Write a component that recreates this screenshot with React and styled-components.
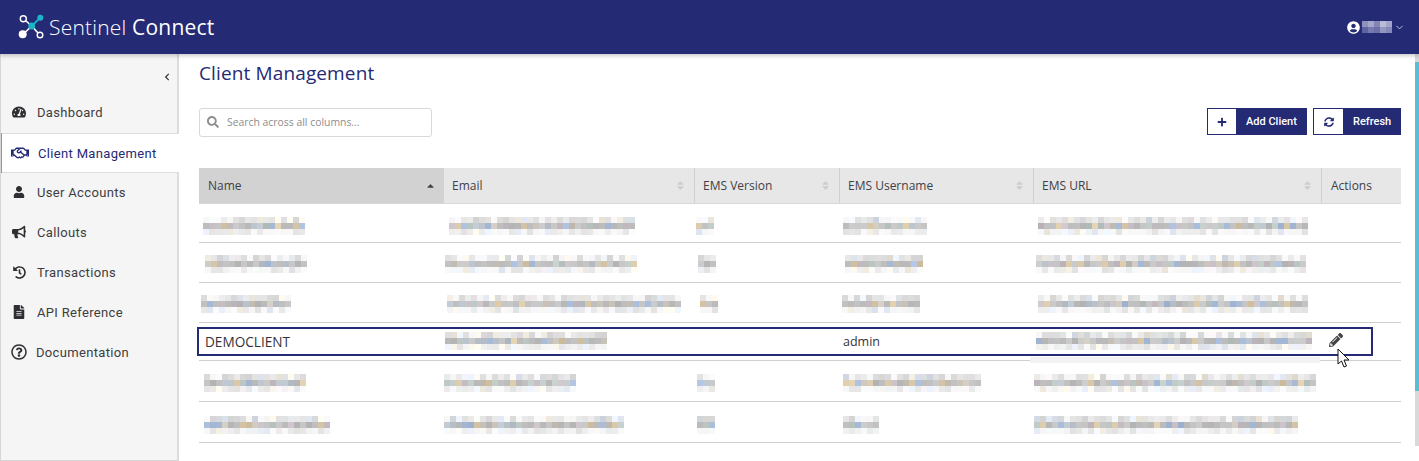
import React from 'react';
import styled, { createGlobalStyle } from 'styled-components';
import {
  FaTachometerAlt, FaRegHandshake, FaUser, FaBullhorn, FaHistory, FaFileAlt, FaRegQuestionCircle,
  FaPlus, FaSyncAlt, FaPencilAlt, FaChevronLeft, FaSearch, FaUserCircle, FaSort, FaSortUp,
} from 'react-icons/fa';
import { FiChevronDown } from 'react-icons/fi';

const NAVY = '#252a75';

const GlobalStyle = createGlobalStyle`
  html, body { margin: 0; padding: 0; height: 100%; overflow: hidden; background: #fff; }
  * { box-sizing: border-box; }
  body { font-family: "Open Sans", "Liberation Sans", sans-serif; }
`;

const Page = styled.div`
  display: flex;
  flex-direction: column;
  height: 461px;
  overflow: hidden;
`;

const Header = styled.header`
  position: relative;
  z-index: 2;
  display: flex;
  align-items: center;
  justify-content: space-between;
  flex: 0 0 54px;
  padding: 0 14px 0 18px;
  background: ${NAVY};
  box-shadow: 0 2px 4px rgba(0, 0, 0, 0.2);
`;

const Brand = styled.div`
  display: flex;
  align-items: center;
  gap: 3px;
  color: #fff;
  font-family: "Open Sans", sans-serif;
  font-size: 21px;
  font-weight: 300;
  letter-spacing: 0.2px;
  span { font-weight: 400; }
`;

const UserMenu = styled.div`
  display: flex;
  align-items: center;
  color: #fff;
  svg { display: block; }
`;

const Caret = styled.span`
  display: flex;
  margin-left: 2px;
  color: #c9cbe0;
`;

const Body = styled.div`
  display: flex;
  flex: 1;
  min-height: 0;
`;

const Sidebar = styled.aside`
  flex: 0 0 179px;
  background: #f5f5f5;
  border-left: 1px solid #d6d6d6;
  border-right: 2px solid #dcdcdc;
  border-bottom: 1px solid #d6d6d6;
`;

const Collapse = styled.div`
  display: flex;
  align-items: center;
  justify-content: flex-end;
  height: 38px;
  padding: 7px 6px 0 0;
  color: #33333a;
`;

const NavItem = styled.div`
  display: flex;
  align-items: center;
  height: 40px;
  padding-left: ${(p) => p.$pad}px;
  font-family: Roboto, sans-serif;
  font-size: 13px;
  letter-spacing: 0.33px;
  color: ${(p) => (p.$active ? NAVY : '#3d3d42')};
  background: ${(p) => (p.$active ? '#fff' : 'transparent')};
  margin: ${(p) => (p.$active ? '1px -2px -1px 0' : '0')};
  box-shadow: ${(p) => (p.$active ? 'inset 1px 0 0 #3db8cf, inset 0 1px 0 #dcdcdc, inset 0 -1px 0 #dcdcdc' : 'none')};
  position: relative;
`;

const NavIcon = styled.span`
  display: flex;
  justify-content: center;
  width: ${(p) => p.$w}px;
  margin-right: ${(p) => p.$gap}px;
  color: ${(p) => (p.$active ? NAVY : '#2e2e33')};
`;

const Main = styled.main`
  flex: 1;
  min-width: 0;
  padding: 0 14px 0 20px;
`;

const Title = styled.h1`
  margin: 0;
  height: 54px;
  padding-top: 6px;
  font-size: 19px;
  line-height: 26px;
  font-weight: 400;
  letter-spacing: 0.13px;
  color: ${NAVY};
`;

const Toolbar = styled.div`
  display: flex;
  justify-content: space-between;
  align-items: flex-start;
  height: 60px;
`;

const SearchBox = styled.div`
  display: flex;
  align-items: center;
  width: 233px;
  height: 29px;
  padding: 0 0 1px 7px;
  border: 1px solid #d9d9d9;
  border-radius: 3px;
  color: #8e8e8e;
  font-size: 10.4px;
  svg { margin-right: 8px; }
`;

const Buttons = styled.div`
  display: flex;
  gap: 6px;
`;

const ActionButton = styled.div`
  display: flex;
  align-items: center;
  width: ${(p) => p.$w}px;
  height: 27px;
  border: 1px solid ${NAVY};
  background: ${NAVY};
  color: #fff;
  font-family: Roboto, sans-serif;
  font-size: 11px;
  font-weight: 500;
`;

const ButtonIcon = styled.span`
  display: flex;
  align-items: center;
  justify-content: center;
  width: ${(p) => p.$w}px;
  height: 25px;
  margin-right: ${(p) => p.$gap}px;
  background: #fff;
  color: ${NAVY};
`;

const Columns = '245px 251px 145px 194px 288px 79px';

const HeadRow = styled.div`
  display: grid;
  grid-template-columns: ${Columns};
  height: 36px;
  border-bottom: 1px solid #d8d8d8;
`;

const HeadCell = styled.div`
  display: flex;
  align-items: center;
  justify-content: space-between;
  padding: 0 8px 0 ${(p) => p.$pad}px;
  background: ${(p) => (p.$sorted ? '#d2d2d2' : '#e7e7e7')};
  border-right: ${(p) => (p.$sorted || p.$last ? 'none' : '1px solid #d0d0d0')};
  font-size: 12px;
  color: #3f3f46;
`;

const SortIcon = styled.span`
  display: flex;
  margin-top: ${(p) => (p.$sorted ? '5px' : '0')};
  color: ${(p) => (p.$sorted ? '#3f3f46' : '#cdcdcd')};
`;

const Row = styled.div`
  position: relative;
  display: grid;
  grid-template-columns: ${Columns};
  height: ${(p) => p.$h}px;
  padding-top: ${(p) => p.$top}px;
  border-bottom: 1px solid #cfcfcf;
  color: #33333a;
`;

const Cell = styled.div`
  padding-left: ${(p) => p.$dx}px;
  font-size: ${(p) => p.$size}px;
  line-height: 20px;
`;

const Mosaic = styled.div`
  display: inline-grid;
  grid-template-columns: repeat(${(p) => p.$cols}, 6px);
  grid-auto-rows: 6px;
  vertical-align: top;
`;

const UserName = styled(Mosaic)`
  margin-left: 2px;
`;

const EditIcon = styled(FaPencilAlt)`
  display: block;
  margin-top: 1px;
  color: #444;
`;

const Focused = styled.div`
  position: absolute;
  left: -2px;
  top: 4px;
  width: 1176px;
  height: 29px;
  border: 2px solid ${NAVY};
  pointer-events: none;
`;

const HoverStrip = styled.div`
  position: absolute;
  left: 831px;
  top: 34px;
  width: 290px;
  height: 6px;
  background: #f2f2f2;
`;

const Pointer = styled.svg`
  position: absolute;
  left: 1138px;
  top: 25px;
  z-index: 1;
`;

const Track = styled.div`
  flex: 0 0 4px;
  height: 392px;
  padding-top: 8px;
  background: #d9d9d9;
`;

const Thumb = styled.div`
  height: 329px;
  background: #5bbdd4;
`;

// blurred-out values in the screenshot, drawn as cells of pseudo random colour
const seeded = (seed) => {
  let s = seed;
  return () => {
    s = (s * 16807) % 2147483647;
    return s / 2147483647;
  };
};

const tints = [[0, 0, 0], [0, 0, 0], [0, 0, 0], [0, 0, 0], [0, 0, 0], [0, 0, 0], [10, 4, -6], [-8, 0, 10], [6, -4, 4], [-4, 6, 2], [24, 8, -24], [-24, -4, 26]];

const cellColor = (rnd, base, spread, strength) => {
  const v = base + rnd() * spread - spread / 2;
  const t = tints[Math.floor(rnd() * tints.length)];
  return `rgb(${v + t[0] * strength}, ${v + t[1] * strength}, ${v + t[2] * strength})`;
};

const Blur = ({ w, seed, bands = [224, 192, 238] }) => {
  const rnd = seeded(seed * 7919 + 13);
  const cols = Math.round(w / 6);
  const cells = [];
  bands.forEach((base, r) => {
    for (let c = 0; c < cols; c++) {
      // the outer rows of a word are patchy, like ascenders and descenders
      const faded = r !== 1 && rnd() < 0.25;
      const color = cellColor(rnd, faded ? 248 : base, faded ? 6 : 26, r === 1 ? 1 : 0.35);
      cells.push(<span key={`${r}-${c}`} style={{ background: color }} />);
    }
  });
  return <Mosaic $cols={cols}>{cells}</Mosaic>;
};

const heads = [
  { label: 'Name', pad: 9, sorted: true },
  { label: 'Email', pad: 8 },
  { label: 'EMS Version', pad: 8 },
  { label: 'EMS Username', pad: 8 },
  { label: 'EMS URL', pad: 8 },
  { label: 'Actions', pad: 9, last: true },
];

const rows = [
  { h: 39, top: 13, cells: [[4, 100], [5, 188], [1, 18], [3, 82], [4, 272]] },
  { h: 40, top: 12, cells: [[6, 100], [1, 194], [3, 18], [5, 76], [2, 272]] },
  { h: 40, top: 12, cells: [[2, 87], [3, 233], [5, 18], [2, 80], [4, 268]] },
  { h: 38, top: 9, focused: true, cells: [[6, 'DEMOCLIENT'], [1, 160], [0, 0], [3, 'admin'], [2, 276]] },
  { h: 41, top: 13, cells: [[5, 100], [0, 130], [2, 18], [3, 135], [0, 282]] },
  { h: 41, top: 14, cells: [[5, 123], [0, 182], [2, 18], [3, 36], [0, 265]] },
];

const nav = [
  { label: 'Dashboard', Icon: FaTachometerAlt, size: 14, w: 14, pad: 11, gap: 11 },
  { label: 'Client Management', Icon: FaRegHandshake, size: 18, w: 18, pad: 10, gap: 9, active: true },
  { label: 'User Accounts', Icon: FaUser, size: 12, w: 14, pad: 11, gap: 11 },
  { label: 'Callouts', Icon: FaBullhorn, size: 14, w: 14, pad: 11, gap: 11 },
  { label: 'Transactions', Icon: FaHistory, size: 13, w: 14, pad: 11, gap: 11 },
  { label: 'API Reference', Icon: FaFileAlt, size: 14, w: 14, pad: 11, gap: 11 },
  { label: 'Documentation', Icon: FaRegQuestionCircle, size: 16, w: 16, pad: 10, gap: 9 },
];

const userCells = ['#8f92bd', '#a6a8cb', '#8386b4', '#b9bbd7', '#a2a4c9', '#5f63a0', '#777ab0', '#6c70a8', '#9396c0', '#8589b8'];

const Logo = () => (
  <svg width="28" height="28" viewBox="0 0 28 28" fill="none">
    <path d="M13.7 13 L7.5 7.5 M13.7 13 L7 19.5 M13.7 13 L20 20" stroke="#fff" strokeWidth="1.6" />
    <path d="M13.7 13 L22.3 4.7" stroke="#19b5c9" strokeWidth="1.8" />
    <circle cx="5.3" cy="5.7" r="3" stroke="#fff" strokeWidth="1.4" />
    <circle cx="22.3" cy="4.7" r="3" fill="#19b5c9" />
    <circle cx="4.7" cy="21.3" r="4" fill="#fff" />
    <circle cx="22" cy="22" r="2.8" stroke="#fff" strokeWidth="1.4" />
    <circle cx="13.7" cy="13" r="3.4" fill="#19b5c9" />
  </svg>
);

const App = () => (
  <Page>
    <GlobalStyle />
    <Header>
      <Brand>
        <Logo />
        <div>Sentinel <span>Connect</span></div>
      </Brand>
      <UserMenu>
        <FaUserCircle size={13} />
        <UserName $cols={5}>
          {userCells.map((color, i) => (
            <span key={i} style={{ background: color }} />
          ))}
        </UserName>
        <Caret><FiChevronDown size={11} /></Caret>
      </UserMenu>
    </Header>
    <Body>
      <Sidebar>
        <Collapse><FaChevronLeft size={8} /></Collapse>
        {nav.map(({ label, Icon, size, w, pad, gap, active }) => (
          <NavItem key={label} $active={active} $pad={pad}>
            <NavIcon $w={w} $gap={gap} $active={active}><Icon size={size} /></NavIcon>
            {label}
          </NavItem>
        ))}
      </Sidebar>
      <Main>
        <Title>Client Management</Title>
        <Toolbar>
          <SearchBox><FaSearch size={12} />Search across all columns...</SearchBox>
          <Buttons>
            <ActionButton $w={100}>
              <ButtonIcon $w={28} $gap={10}><FaPlus size={10} /></ButtonIcon>Add Client
            </ActionButton>
            <ActionButton $w={88}>
              <ButtonIcon $w={29} $gap={10}><FaSyncAlt size={10} /></ButtonIcon>Refresh
            </ActionButton>
          </Buttons>
        </Toolbar>
        <HeadRow>
          {heads.map(({ label, pad, sorted, last }) => (
            <HeadCell key={label} $pad={pad} $sorted={sorted} $last={last}>
              {label}
              {!last && (
                <SortIcon $sorted={sorted}>{sorted ? <FaSortUp size={11} /> : <FaSort size={11} />}</SortIcon>
              )}
            </HeadCell>
          ))}
        </HeadRow>
        {rows.map((row, r) => (
          <Row key={r} $h={row.h} $top={row.top}>
            {row.cells.map(([dx, value], c) => (
              <Cell key={c} $dx={dx} $size={value === 'DEMOCLIENT' ? 13.6 : 12.5}>
                {typeof value === 'string' ? value : value > 0 && <Blur w={value} seed={r * 10 + c + 1} />}
              </Cell>
            ))}
            <Cell $dx={7} $size={12.5}>{row.focused && <EditIcon size={14} />}</Cell>
            {row.focused && (
              <>
                <HoverStrip />
                <Focused />
                <Pointer width="16" height="22" viewBox="0 0 16 22">
                  <path d="M1 1 L1 16 L4.5 13 L7 19 L9.5 18 L7 12 L12 12 Z" fill="#fff" stroke="#111" strokeWidth="1" />
                </Pointer>
              </>
            )}
          </Row>
        ))}
      </Main>
      <Track><Thumb /></Track>
    </Body>
  </Page>
);

export default App;
